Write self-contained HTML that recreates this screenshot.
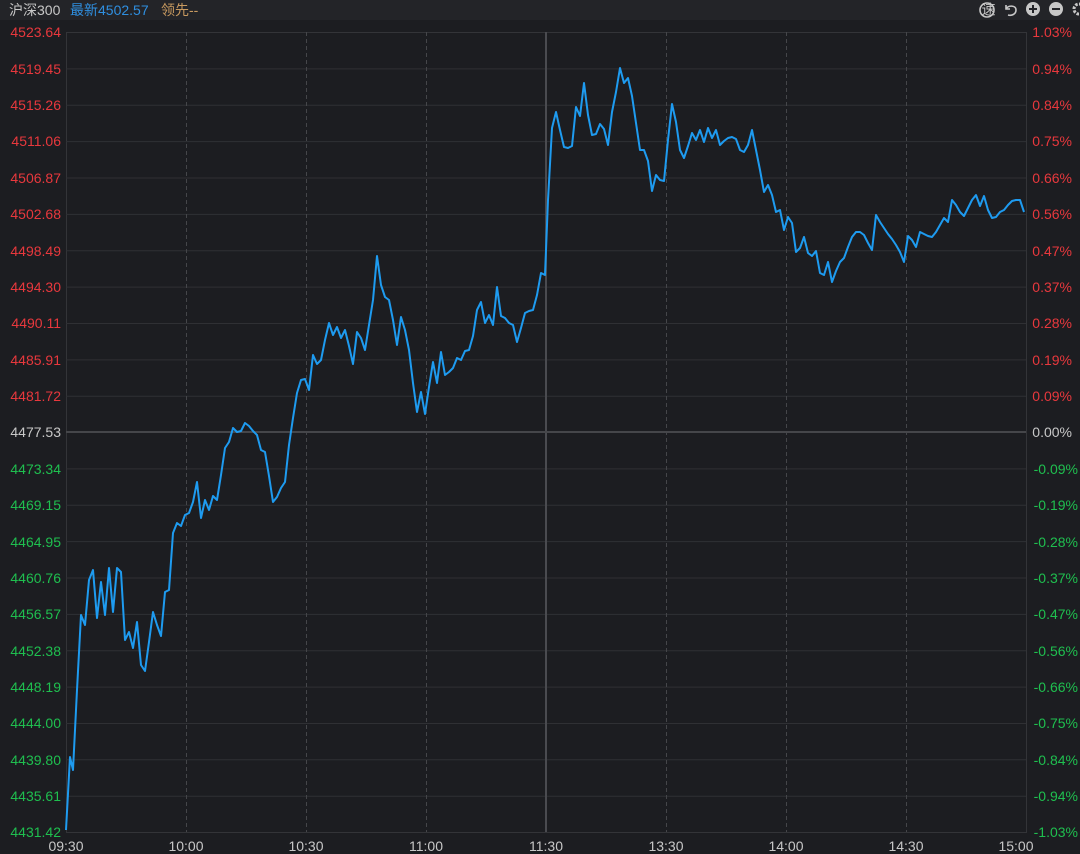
<!DOCTYPE html>
<html><head><meta charset="utf-8"><style>
html,body{margin:0;padding:0;background:#1c1d21;}
svg{display:block}
text{font-family:"Liberation Sans","Noto Sans CJK SC",sans-serif;font-size:14px}
</style></head><body>
<svg width="1080" height="854" viewBox="0 0 1080 854" xmlns="http://www.w3.org/2000/svg">
<rect width="1080" height="854" fill="#1c1d21"/>
<rect width="1080" height="20" fill="#232428"/>
<text x="9" y="15" fill="#c8c8c8">沪深300</text>
<text x="70" y="15" fill="#2f8fe0">最新4502.57</text>
<text x="161" y="15" fill="#c89a60">领先--</text>
<g fill="none" stroke="#c8c8c8" stroke-width="1.6">
<circle cx="987" cy="10" r="7"/><text x="981.5" y="14.5" font-size="10" fill="#c8c8c8" stroke="none">速</text>
<path d="M1006 5 v4 h4 M1006 9 C1008 5,1016 5,1016 10 C1016 14,1012 16,1008 15"/>
</g>
<circle cx="1033" cy="9" r="7" fill="#c8c8c8"/><path d="M1029 9h8M1033 5v8" stroke="#232428" stroke-width="2"/>
<circle cx="1056" cy="9" r="7" fill="#c8c8c8"/><path d="M1052 9h8" stroke="#232428" stroke-width="2"/>
<circle cx="1079" cy="9" r="5" fill="none" stroke="#c8c8c8" stroke-width="3" stroke-dasharray="2.5 1.4"/>
<g stroke="#2f3034" stroke-width="1">
<rect x="66.5" y="32.5" width="960" height="800" fill="none" stroke="#333438"/>
<path d="M66 68.9H1026M66 105.3H1026M66 141.6H1026M66 178H1026M66 214.4H1026M66 250.7H1026M66 287.1H1026M66 323.5H1026M66 359.9H1026M66 396.2H1026M66 468.9H1026M66 505.3H1026M66 541.6H1026M66 578H1026M66 614.4H1026M66 650.7H1026M66 687.1H1026M66 723.5H1026M66 759.8H1026M66 796.2H1026"/>
</g>
<g stroke="#45464a" stroke-width="1" stroke-dasharray="4 3">
<path d="M186.5 32V832M306.5 32V832M426.5 32V832M666.5 32V832M786.5 32V832M906.5 32V832"/>
</g>
<path d="M546 32V832" stroke="#4a4b50" stroke-width="2"/>
<path d="M66 432H1026" stroke="#45464a" stroke-width="2"/>
<g text-anchor="end">
<text x="61" y="37" fill="#e8383d">4523.64</text>
<text x="61" y="74" fill="#e8383d">4519.45</text>
<text x="61" y="110" fill="#e8383d">4515.26</text>
<text x="61" y="146" fill="#e8383d">4511.06</text>
<text x="61" y="183" fill="#e8383d">4506.87</text>
<text x="61" y="219" fill="#e8383d">4502.68</text>
<text x="61" y="256" fill="#e8383d">4498.49</text>
<text x="61" y="292" fill="#e8383d">4494.30</text>
<text x="61" y="328" fill="#e8383d">4490.11</text>
<text x="61" y="365" fill="#e8383d">4485.91</text>
<text x="61" y="401" fill="#e8383d">4481.72</text>
<text x="61" y="437" fill="#c8c8c8">4477.53</text>
<text x="61" y="474" fill="#1fbf4f">4473.34</text>
<text x="61" y="510" fill="#1fbf4f">4469.15</text>
<text x="61" y="547" fill="#1fbf4f">4464.95</text>
<text x="61" y="583" fill="#1fbf4f">4460.76</text>
<text x="61" y="619" fill="#1fbf4f">4456.57</text>
<text x="61" y="656" fill="#1fbf4f">4452.38</text>
<text x="61" y="692" fill="#1fbf4f">4448.19</text>
<text x="61" y="728" fill="#1fbf4f">4444.00</text>
<text x="61" y="765" fill="#1fbf4f">4439.80</text>
<text x="61" y="801" fill="#1fbf4f">4435.61</text>
<text x="61" y="837" fill="#1fbf4f">4431.42</text>
</g>
<g text-anchor="end">
<text x="1072" y="37" fill="#e8383d">1.03%</text>
<text x="1072" y="74" fill="#e8383d">0.94%</text>
<text x="1072" y="110" fill="#e8383d">0.84%</text>
<text x="1072" y="146" fill="#e8383d">0.75%</text>
<text x="1072" y="183" fill="#e8383d">0.66%</text>
<text x="1072" y="219" fill="#e8383d">0.56%</text>
<text x="1072" y="256" fill="#e8383d">0.47%</text>
<text x="1072" y="292" fill="#e8383d">0.37%</text>
<text x="1072" y="328" fill="#e8383d">0.28%</text>
<text x="1072" y="365" fill="#e8383d">0.19%</text>
<text x="1072" y="401" fill="#e8383d">0.09%</text>
<text x="1072" y="437" fill="#c8c8c8">0.00%</text>
<text x="1078" y="474" fill="#1fbf4f">-0.09%</text>
<text x="1078" y="510" fill="#1fbf4f">-0.19%</text>
<text x="1078" y="547" fill="#1fbf4f">-0.28%</text>
<text x="1078" y="583" fill="#1fbf4f">-0.37%</text>
<text x="1078" y="619" fill="#1fbf4f">-0.47%</text>
<text x="1078" y="656" fill="#1fbf4f">-0.56%</text>
<text x="1078" y="692" fill="#1fbf4f">-0.66%</text>
<text x="1078" y="728" fill="#1fbf4f">-0.75%</text>
<text x="1078" y="765" fill="#1fbf4f">-0.84%</text>
<text x="1078" y="801" fill="#1fbf4f">-0.94%</text>
<text x="1078" y="837" fill="#1fbf4f">-1.03%</text>
</g>
<g fill="#c8c8c8" text-anchor="middle">
<text x="66" y="851">09:30</text><text x="186" y="851">10:00</text><text x="306" y="851">10:30</text><text x="426" y="851">11:00</text><text x="546" y="851">11:30</text><text x="666" y="851">13:30</text><text x="786" y="851">14:00</text><text x="906" y="851">14:30</text><text x="1016" y="851">15:00</text>
</g>
<polyline fill="none" stroke="#1e9bf0" stroke-width="2" stroke-linejoin="round" points="66,830 70,757 73,770 77,690 81,615 85,625 89,580 93,570 97,618 101,582 105,615 109,568 113,612 117,568 121,572 125,640 129,632 133,648 137,622 141,665 145,671 149,642 153,612 157,625 161,636 165,592 169,590 173,533 177,523 181,526 185,515 189,513 193,502 197,482 201,518 205,500 209,510 213,496 217,500 221,475 225,448 229,442 233,428 237,432 241,431 245,423 249,426 253,431 257,435 261,450 265,452 269,476 273,502 277,497 281,488 285,482 289,445 293,418 297,393 301,380 305,379 309,390 313,355 317,364 321,360 325,340 329,323 333,335 337,327 341,338 345,330 349,346 353,364 357,332 361,338 365,350 369,325 373,300 377,256 381,285 385,297 389,300 393,320 397,345 401,317 405,330 409,350 413,383 417,412 421,392 425,414 429,387 433,362 437,383 441,352 445,375 449,372 453,368 457,358 461,360 465,351 469,350 473,336 477,310 481,302 485,323 489,315 493,325 497,287 501,316 505,318 509,323 513,325 517,342 521,328 525,313 529,311 533,310 537,295 541,273 545,275 548,200 552,128 556,112 560,130 564,147 568,148 572,146 576,107 580,116 584,83 588,115 592,135 596,134 600,124 604,129 608,145 612,112 616,92 620,68 624,83 628,78 632,96 636,123 640,150 644,150 648,161 652,191 656,175 660,180 664,181 668,140 672,104 676,122 680,150 684,158 688,146 692,133 696,140 700,130 704,142 708,128 712,138 716,130 720,145 724,141 728,138 732,137 736,139 740,150 744,152 748,145 752,130 756,150 760,170 764,192 768,185 772,195 776,212 780,210 784,230 788,217 792,223 796,252 800,248 804,237 808,253 812,256 816,251 820,273 824,275 828,262 832,282 836,271 840,262 844,258 848,247 852,237 856,232 860,232 864,235 868,243 872,250 876,215 880,222 884,228 888,234 892,239 896,245 900,252 904,262 908,236 912,240 916,247 920,232 924,234 928,236 932,237 936,232 940,225 944,218 948,222 952,200 956,205 960,212 964,216 968,208 972,200 976,195 980,206 984,196 988,210 992,218 996,217 1000,212 1004,210 1008,205 1012,201 1016,200 1020,200 1024,212"/>
</svg>
</body></html>
